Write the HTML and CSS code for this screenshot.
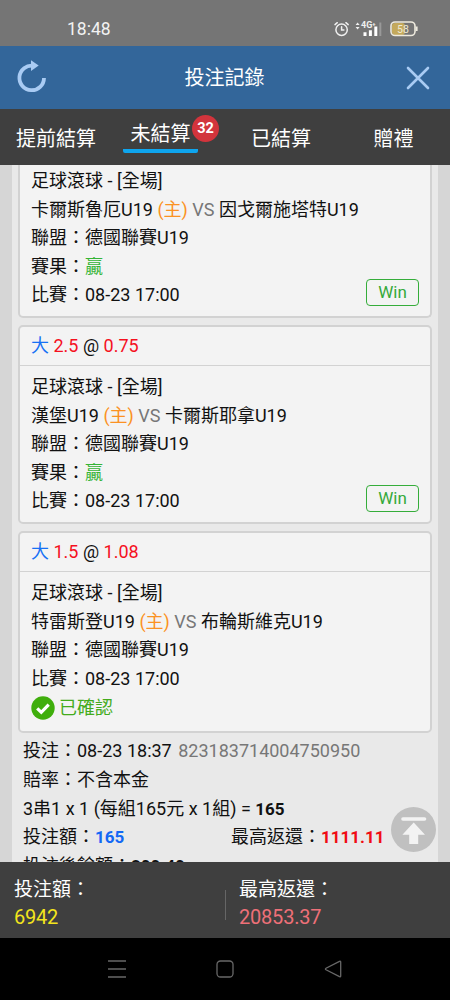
FILE: index.html
```html
<!DOCTYPE html>
<html lang="zh-Hant">
<head>
<meta charset="utf-8">
<title>投注記錄</title>
<link rel="stylesheet" href="styles.css">
</head>
<body>
<div class="phone">
  <div class="status">
    <span class="clock">18:48</span>
    <svg class="status-icons" width="90" height="20" viewBox="0 0 90 20">
      <g fill="none" stroke="#f0f0f0" stroke-width="1.5" stroke-linecap="round">
        <circle cx="8.600" cy="10.800" r="5.700"/>
        <path d="M8.600 7.800v3.200h2.300M2 5.600L4.300 3.700M15.200 5.600L12.900 3.700"/>
      </g>
      <path d="M22.600 6l2-2.500 2 2.500zM22.600 8l2 2.500 2-2.500z" fill="#f0f0f0"/>
      <text x="28" y="9.200" class="net">4G<tspan class="plus" dy="-2">+</tspan></text>
      <path d="M32 13.200V17M37.400 11.200V17M42.800 7.500V17" stroke="#fff" stroke-width="3"/>
      <path d="M47.300 3.500V17" stroke="#999" stroke-width="2"/>
      <rect x="59" y="4" width="13" height="12" rx="3" fill="#c4a95c"/>
      <rect x="58" y="3" width="24" height="13.500" rx="4" fill="none" stroke="#eeeade" stroke-width="1.600"/>
      <path d="M83.600 7.500v4.500" stroke="#eeeade" stroke-width="2"/>
      <text x="64" y="13.600" class="charge">58</text>
    </svg>
  </div>
  <header class="titlebar">
    <svg width="32" height="36" viewBox="0 0 32 36">
      <path d="M17.500 5.700A12.300 12.300 0 1 0 28 17.900" fill="none" stroke="#a9cbf3" stroke-width="3.800"/>
      <path d="M15 .2L22.700 5.600 15 11z" fill="#a9cbf3"/>
    </svg>
    <h1 class="title">投注記錄</h1>
    <svg width="26" height="26" viewBox="0 0 26 26">
      <path d="M3 3L23 23M23 3L3 23" stroke="#a9cbf3" stroke-width="2.600" stroke-linecap="round"/>
    </svg>
  </header>
  <nav class="tabs">
    <span class="tab">提前結算</span>
    <span class="tab active"><span class="tab-label">未結算</span><b class="badge">32</b></span>
    <span class="tab">已結算</span>
    <span class="tab">贈禮</span>
  </nav>
  <main class="list">
    <div class="panel">
      <section class="card first">
        <div class="card-body">
          <p>足球滾球 - [全場]</p>
          <p>卡爾斯魯厄U19 <span class="home">(主)</span> <span class="vs">VS</span> 因戈爾施塔特U19</p>
          <p>聯盟：德國聯賽U19</p>
          <p>賽果：<span class="won">贏</span></p>
          <p class="split">比賽：08-23 17:00 <span class="win">Win</span></p>
        </div>
      </section>
      <section class="card">
        <div class="pick"><span class="side">大</span> <span class="odds">2.5</span> @ <span class="odds">0.75</span></div>
        <div class="card-body">
          <p>足球滾球 - [全場]</p>
          <p>漢堡U19 <span class="home">(主)</span> <span class="vs">VS</span> 卡爾斯耶拿U19</p>
          <p>聯盟：德國聯賽U19</p>
          <p>賽果：<span class="won">贏</span></p>
          <p class="split">比賽：08-23 17:00 <span class="win">Win</span></p>
        </div>
      </section>
      <section class="card">
        <div class="pick"><span class="side">大</span> <span class="odds">1.5</span> @ <span class="odds">1.08</span></div>
        <div class="card-body last">
          <p>足球滾球 - [全場]</p>
          <p>特雷斯登U19 <span class="home">(主)</span> <span class="vs">VS</span> 布輪斯維克U19</p>
          <p>聯盟：德國聯賽U19</p>
          <p>比賽：08-23 17:00</p>
          <p class="confirmed">
            <svg width="24" height="24" viewBox="0 0 24 24"><circle cx="12" cy="12" r="11.700" fill="#3fae0c"/><path d="M6.200 12.300l4.100 4 7.400-7.600" fill="none" stroke="#fff" stroke-width="3.200"/></svg>
            已確認
          </p>
        </div>
      </section>
      <div class="ticket">
        <p>投注：08-23 18:37 <span class="serial">823183714004750950</span></p>
        <p>賠率：不含本金</p>
        <p>3串1 x 1 (每組165元 x 1組) = <b>165</b></p>
        <p class="amounts"><span>投注額：<b class="stake">165</b></span><span>最高返還：<b class="payout">1111.11</b></span></p>
        <p>投注後餘額：<b>200.40</b></p>
      </div>
    </div>
    <svg class="to-top" width="45" height="45" viewBox="0 0 45 45">
      <circle cx="22.500" cy="22.500" r="22.500" fill="#c0c0c0"/>
      <path d="M12 12h21.500" stroke="#f3f3f3" stroke-width="3.600" stroke-linecap="round"/>
      <path d="M22.700 15.500L34 27.800h-6.800V37h-9v-9.200h-6.800z" fill="#f3f3f3"/>
    </svg>
  </main>
  <footer class="totals">
    <div class="total"><span>投注額：</span><span class="sum-stake">6942</span></div>
    <div class="total right"><span>最高返還：</span><span class="sum-payout">20853.37</span></div>
  </footer>
  <div class="navkeys">
    <svg width="18" height="18" viewBox="0 0 18 18"><path d="M0 1h18M0 9h18M0 17h18"/></svg>
    <svg width="18" height="18" viewBox="0 0 18 18"><rect x="1" y="1" width="16" height="16" rx="3.500"/></svg>
    <svg width="18" height="18" viewBox="0 0 18 18"><path d="M15.500 1.300L2 8.200q-1.200.8 0 1.600l13.500 6.900q1.200.4 1.200-.8V2.100q0-1.200-1.200-.8z"/></svg>
  </div>
</div>
</body>
</html>
```

FILE: styles.css
```css
* { box-sizing: border-box; }
body { margin: 0; font-family: Roboto, "Noto Sans CJK TC", sans-serif; color: #111; }
p, h1 { margin: 0; }
svg { display: block; flex: none; }
.phone { width: 450px; height: 1000px; display: flex; flex-direction: column; overflow: hidden; }

.status { height: 46px; flex: none; background: #757575; display: flex; justify-content: space-between; align-items: flex-start; padding: 18px 27px 0 67px; }
.clock { font-size: 17.5px; line-height: 22px; color: #f2f2f2; }
.status-icons { margin-top: 1px; }
.net { font-size: 9px; font-weight: 700; fill: #f0f0f0; }
.plus { font-size: 6px; }
.charge { font-size: 10.5px; fill: #f0ead4; }

.titlebar { height: 63px; flex: none; background: #33669a; display: flex; align-items: center; justify-content: space-between; padding: 0 19px 0 16px; }
.title { font-size: 20px; line-height: 30px; font-weight: 400; color: #fff; padding-right: 4px; }

.tabs { height: 56px; flex: none; background: #3f3f3f; color: #fff; font-size: 20px; line-height: 30px; display: grid; grid-template-columns: 112px 113px 112px 113px; text-align: center; }
.tab { padding-top: 15px; }
.tab.active { padding: 10px 0 0 11px; display: flex; align-items: flex-start; position: relative; }
.tab-label { width: 75px; height: 34px; border-bottom: 4px solid #0ea5ee; border-radius: 2px; }
.badge { position: absolute; left: 80px; top: 6px; width: 27px; height: 27px; border-radius: 50%; background: #d2343c; font-size: 14.5px; line-height: 27px; }

.list { height: 697px; flex: none; background: #d6d6d6; padding: 0 12px; overflow: hidden; position: relative; }
.panel { background: #e9e9e9; padding: 0 6px; font-size: 18px; line-height: 28.6px; white-space: nowrap; }
.card { background: #f3f3f3; border: 2px solid #d2d2d2; border-radius: 5px; margin-bottom: 7px; }
.card.first { border-top: 0; border-radius: 0 0 5px 5px; }
.card.first .card-body { padding: 2px 11px 6px; }
.card-body { padding: 7px 11px 6px; }
.card-body.last { padding: 7px 11px 8px; }
.pick { height: 39px; line-height: 38px; padding-left: 11px; border-bottom: 1.5px solid #d2d2d2; }
.side { color: #1670f5; }
.odds { color: #f5101e; }
.home { color: #fb9223; }
.vs { color: #777; }
.won { color: #35b435; }
.split { display: flex; justify-content: space-between; }
.win { width: 53px; height: 27px; margin-top: -2px; border: 1.5px solid #35ad3a; border-radius: 4px; color: #35a93a; font-size: 17px; line-height: 25px; text-align: center; }
.confirmed { height: 30px; line-height: 30px; display: flex; align-items: center; gap: 4px; color: #43ab1c; }
.ticket { padding-left: 5px; margin-top: -3px; }
.ticket b { font-size: 17px; }
.serial { color: #777; margin-left: 2px; }
.amounts { display: grid; grid-template-columns: 208px 1fr; }
.stake { color: #1268f5; }
.payout { color: #f00c14; }
.to-top { position: absolute; left: 391px; top: 642px; }

.totals { height: 76px; flex: none; background: #3f3f3f; color: #fff; font-size: 19px; line-height: 28px; display: grid; grid-template-columns: 225px 225px; padding-top: 14px; }
.total { display: flex; flex-direction: column; padding-left: 14px; }
.right { background: linear-gradient(#666, #666) 0 14px / 1px 30px no-repeat; }
.total > :last-child { font-size: 20px; line-height: 26px; letter-spacing: -0.2px; }
.sum-stake { color: #f3e51c; }
.sum-payout { color: #ee7078; }

.navkeys { flex: 1; background: #000; display: flex; justify-content: center; gap: 90px; padding-top: 22px; }
.navkeys svg { fill: none; stroke: #686868; stroke-width: 1.3; }
```
